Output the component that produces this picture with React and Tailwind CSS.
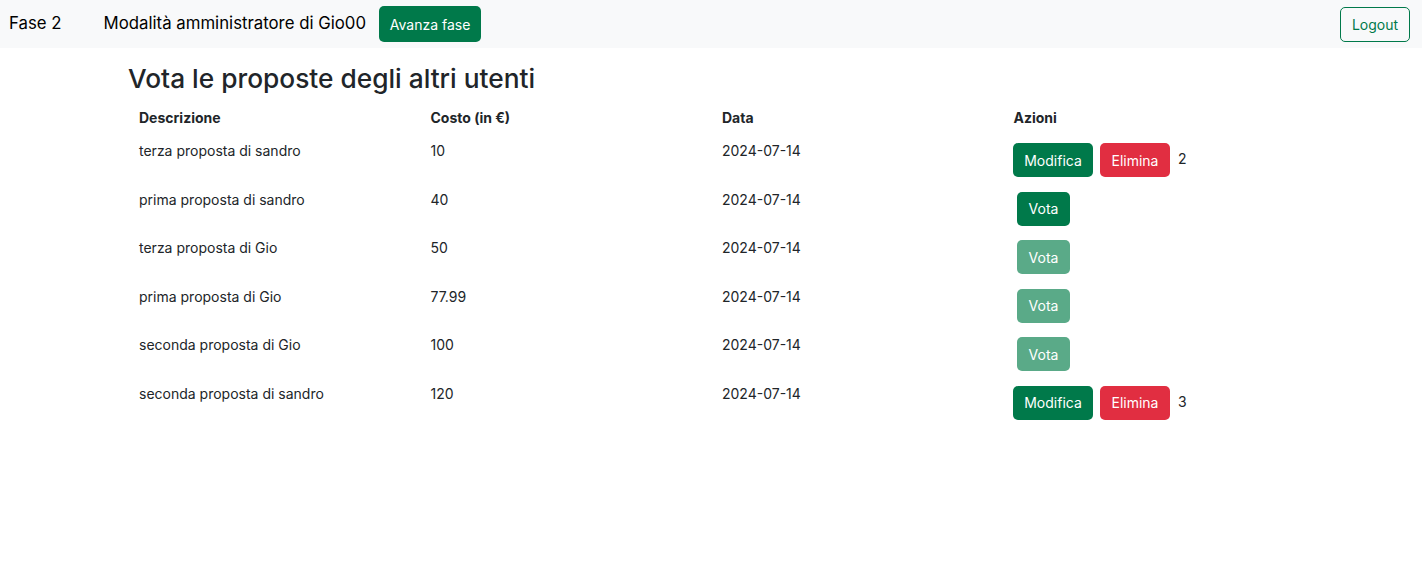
import React from 'react';

// --- Data ---
const proposte = [
    { descrizione: 'terza proposta di sandro', costo: '10', data: '2024-07-14', mine: true, voti: 2 },
    { descrizione: 'prima proposta di sandro', costo: '40', data: '2024-07-14', canVote: true },
    { descrizione: 'terza proposta di Gio', costo: '50', data: '2024-07-14' },
    { descrizione: 'prima proposta di Gio', costo: '77.99', data: '2024-07-14' },
    { descrizione: 'seconda proposta di Gio', costo: '100', data: '2024-07-14' },
    { descrizione: 'seconda proposta di sandro', costo: '120', data: '2024-07-14', mine: true, voti: 3 },
];

const Navbar = () => (
    <nav className="h-12 bg-[#f8f9fa] flex items-center pl-[9px] pr-3">
        <span className="text-[16.8px] text-black">Fase 2</span>
        <span className="ml-[42px] text-[16.8px] text-black">Modalità amministratore di Gio00</span>
        <button className="ml-[13px] h-9 w-[102px] rounded-[5px] bg-[#00794a] text-white text-[14px]">Avanza fase</button>
        <button className="ml-auto h-[35px] w-[70px] rounded-[5px] border border-[#00794a] text-[#00794a] text-[14px] bg-transparent">Logout</button>
    </nav>
);

const Azioni = ({ row }) => {
    if (row.mine) {
        return (
            <div className="flex items-center">
                <button className="h-[34px] w-20 rounded-[5px] bg-[#00794a] text-white text-[14px]">Modifica</button>
                <button className="ml-[7px] h-[34px] w-[70px] rounded-[5px] bg-[#e12e41] text-white text-[14px]">Elimina</button>
                <span className="ml-2 leading-5 text-[14px] -mt-[2px]">{row.voti}</span>
            </div>
        );
    }
    return (
        <button
            disabled={!row.canVote}
            className={`ml-1 h-[34px] w-[53px] rounded-[5px] text-white text-[14px] ${row.canVote ? 'bg-[#00794a]' : 'bg-[#5aaa88]'}`}
        >
            Vota
        </button>
    );
};

const App = () => (
    <div className="min-h-[573px] bg-white text-[#212529]" style={{ fontFamily: 'Inter, "Liberation Sans", sans-serif' }}>
        <Navbar />
        <main className="w-[1166px] mx-auto">
            <h1 className="mt-[15px] text-[26.3px] leading-[32px] font-medium">Vota le proposte degli altri utenti</h1>
            <table className="mt-[10px] w-full table-fixed text-[14px]">
                <thead>
                    <tr>
                        {['Descrizione', 'Costo (in €)', 'Data', 'Azioni'].map(h => (
                            <th key={h} className="text-left font-bold px-[11px] pt-[3px] pb-[7px] leading-5">{h}</th>
                        ))}
                    </tr>
                </thead>
                <tbody>
                    {proposte.map((row, i) => (
                        <tr key={i} className="h-[48.5px] align-top">
                            <td className="px-[11px] pt-[6px] leading-5">{row.descrizione}</td>
                            <td className="px-[11px] pt-[6px] leading-5">{row.costo}</td>
                            <td className="px-[11px] pt-[6px] leading-5">{row.data}</td>
                            <td className="pl-[10.5px] pr-0 pt-2">
                                <Azioni row={row} />
                            </td>
                        </tr>
                    ))}
                </tbody>
            </table>
        </main>
    </div>
);

export default App;
